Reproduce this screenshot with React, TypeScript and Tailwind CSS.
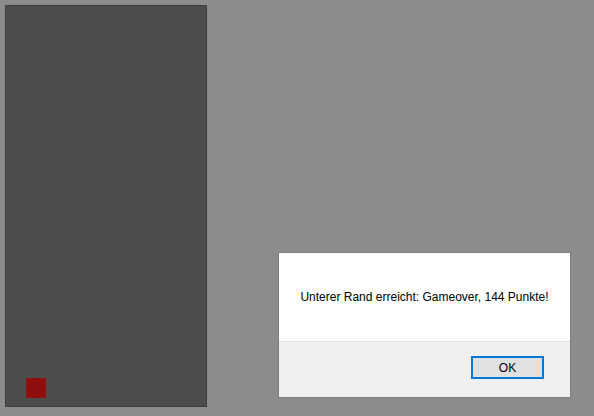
export default function App() {
  return (
    <div className="relative w-[594px] h-[416px] overflow-hidden bg-[#8c8c8c] font-['Liberation_Sans',Arial,sans-serif]">
      {/* Spielfeld */}
      <div className="relative ml-[5px] mt-[5px] w-[202px] h-[402px] border border-[#3e3e3e] bg-[#4d4d4d] inline-block align-top">
        <div className="absolute left-[20px] top-[372px] w-[20px] h-[20px] bg-[#8f0e0e]" />
      </div>

      {/* Alert-Dialog */}
      <div className="absolute left-[278px] top-[252px] w-[293px] h-[146px] border border-[#7f7f7f] bg-white flex flex-col">
        <div className="h-[88px] flex items-center justify-center text-[12px] text-black">
          Unterer Rand erreicht: Gameover, 144 Punkte!
        </div>
        <div className="flex-1 border-t border-[#dfdfdf] bg-[#f0f0f0] flex justify-end items-start pt-[14px] pr-[26px]">
          <button className="w-[73px] h-[23px] border-2 border-[#0078d7] bg-[#e1e1e1] text-[12px] text-black leading-none">
            OK
          </button>
        </div>
      </div>
    </div>
  );
}
